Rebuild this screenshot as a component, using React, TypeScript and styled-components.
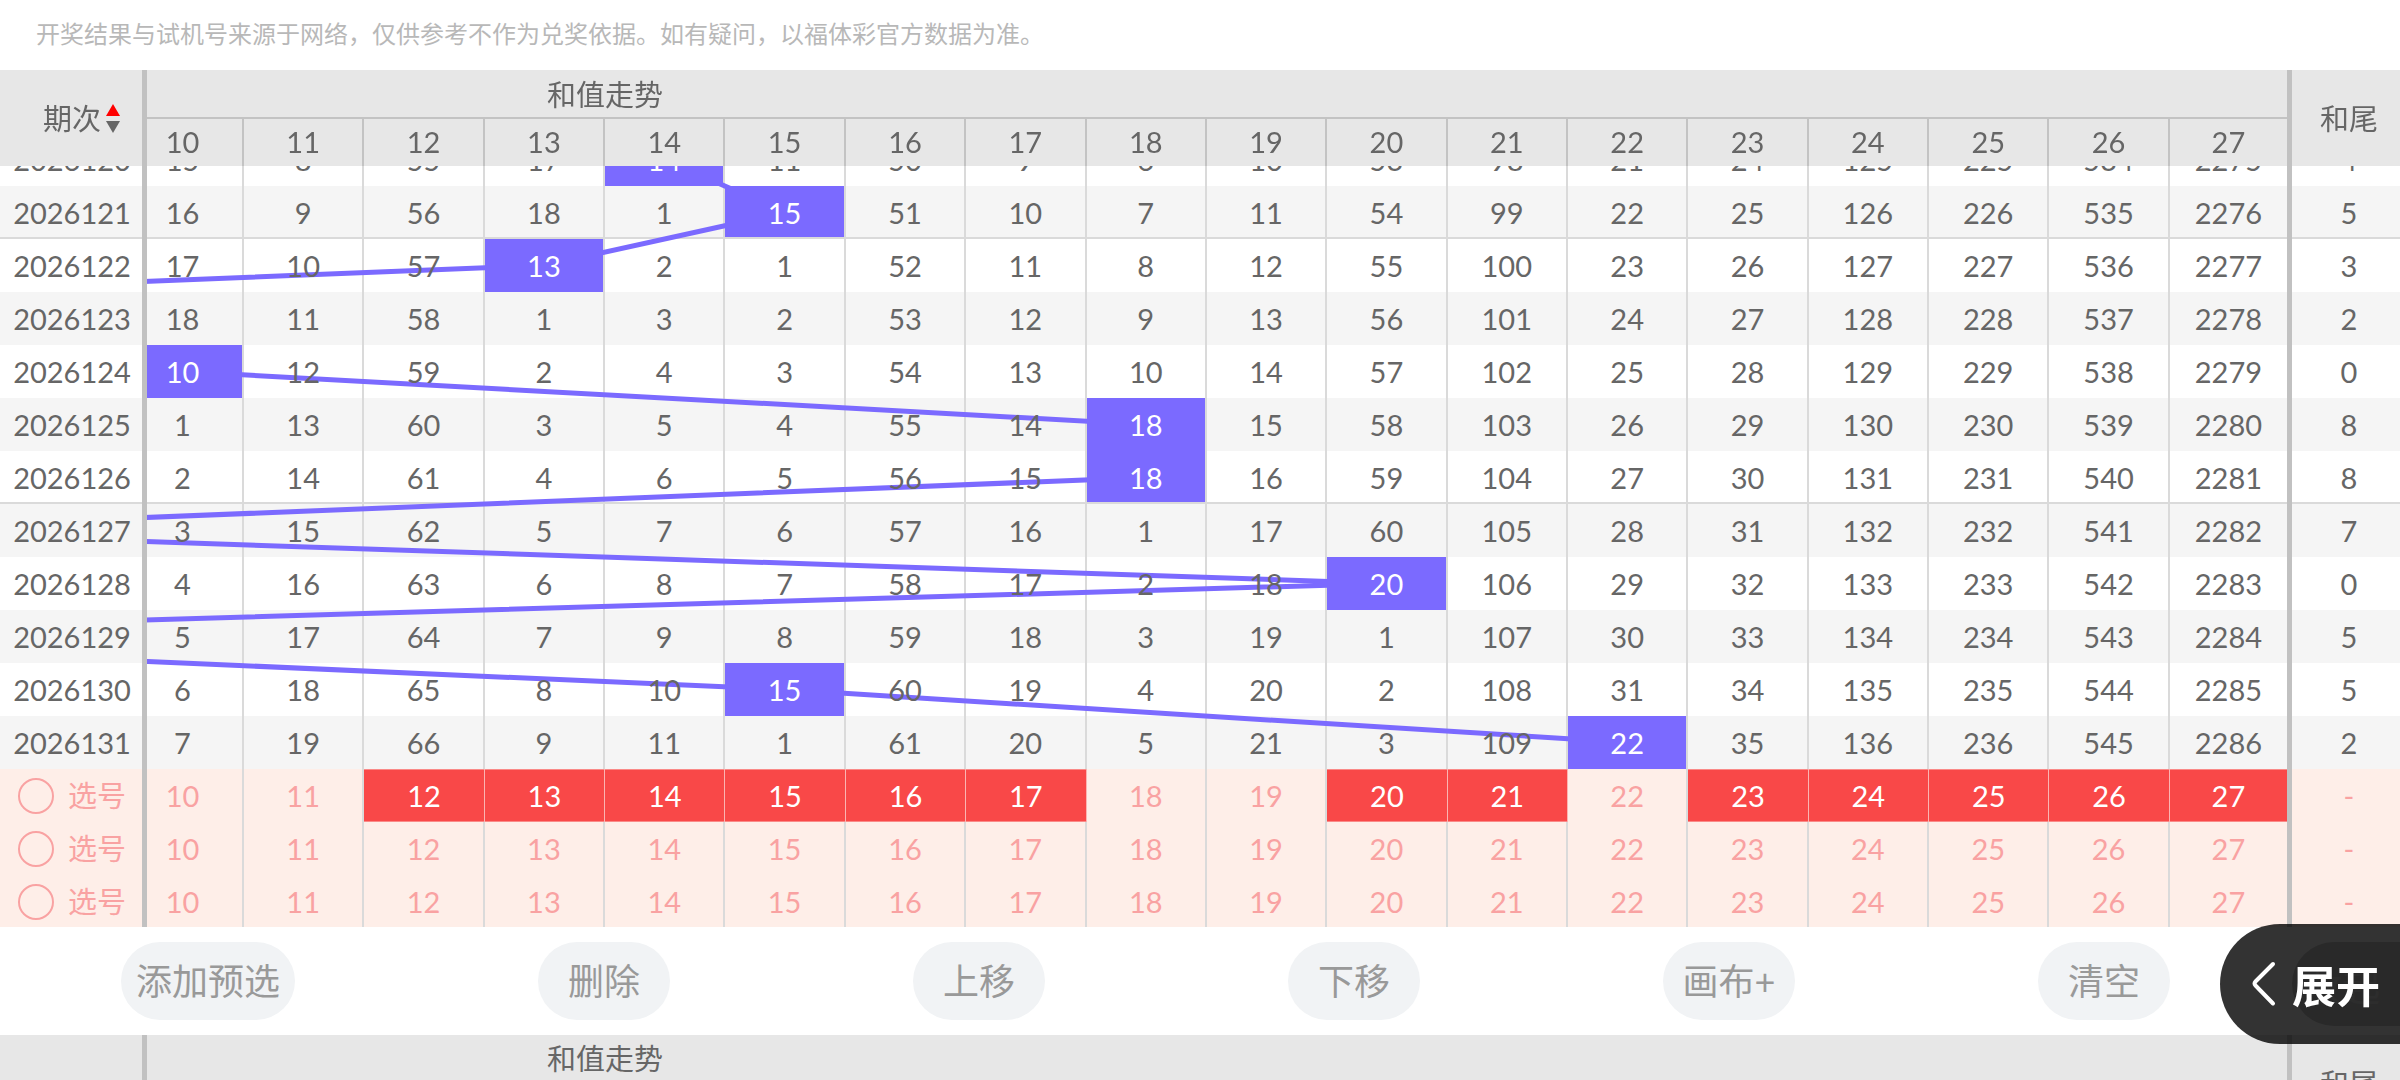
import React, { useLayoutEffect, useRef, useState } from "react";
import styled, { createGlobalStyle, css } from "styled-components";

const SUMS = [10, 11, 12, 13, 14, 15, 16, 17, 18, 19, 20, 21, 22, 23, 24, 25, 26, 27];
const FIRST_PERIOD = 2026120;
const DRAWS = [14, 15, 13, 2, 10, 18, 18, 7, 20, 5, 15, 22];
const FIRST_MISSES = [15, 8, 55, 17, 0, 11, 50, 9, 6, 10, 53, 98, 21, 24, 125, 225, 534, 2275];
const PICKED = [12, 13, 14, 15, 16, 17, 20, 21, 23, 24, 25, 26, 27];

const ROW_HEIGHT = 53;
const HEADER_HEIGHT = 96;
const PICK_ROWS = 3;
const INITIAL_SCROLL = 33;
const CHART_WIDTH = 2400;
const BODY_HEIGHT = ROW_HEIGHT * (DRAWS.length + PICK_ROWS);

const rows = DRAWS.reduce<{ period: number; sum: number; misses: number[] }[]>((list, sum, i) => {
  const previous = list[i - 1];
  const misses = previous
    ? previous.misses.map((m, c) => (SUMS[c] === sum ? 0 : m + 1))
    : FIRST_MISSES;
  list.push({ period: FIRST_PERIOD + i, sum, misses });
  return list;
}, []);

const trendPoints = DRAWS.map(
  (sum, i) => `${183 + (sum - 10) * 120.375},${i * ROW_HEIGHT + ROW_HEIGHT / 2}`
).join(" ");

const GlobalStyle = createGlobalStyle`
  html, body, #root { height: 100%; }
  body {
    margin: 0;
    overflow: hidden;
    background: #fff;
    color: #666;
    font-family: Lato, "Noto Sans CJK SC", sans-serif;
    font-size: 29px;
  }
  *, *::before, *::after { box-sizing: border-box; }
  button, input { font: inherit; color: inherit; margin: 0; }
  button { border: 0; padding: 0; background: none; cursor: pointer; }
`;

const Page = styled.main`
  display: flex;
  flex-direction: column;
  height: 100vh;
  overflow: hidden;
`;

const Notice = styled.p`
  flex: none;
  margin: 0;
  padding: 0 36px;
  height: 70px;
  line-height: 68px;
  font-size: 24px;
  color: #b8b8b8;
`;

const Board = styled.section`
  flex: none;
  max-height: 857px;
  overflow: hidden auto;
  scrollbar-width: none;
`;

const Sheet = styled.div`
  position: relative;
`;

const Table = styled.table`
  width: 100%;
  table-layout: fixed;
  border-collapse: separate;
  border-spacing: 0;
  text-align: center;
`;

const Col = styled.col<{ $width?: number }>`
  ${(p) => p.$width && `width: ${p.$width}px;`}
`;

const Head = styled.thead`
  position: sticky;
  top: 0;
  z-index: 2;
  background: #e7e7e7;
`;

const HeadCell = styled.th<{ $divided?: boolean; $first?: boolean }>`
  height: 47px;
  padding: 0 ${(p) => (p.$first ? 24 : 0)}px 2px 0;
  font-weight: 400;
  line-height: 44px;
  border-right: ${(p) => (p.$divided ? "2px solid #c3c3c3" : "0")};
`;

const GroupCell = styled(HeadCell)`
  height: 49px;
  padding: 2px 0 0 400px;
  text-align: left;
  border-bottom: 2px solid #c3c3c3;
`;

const PeriodHead = styled(HeadCell)`
  padding: 2px 0 0 22px;
  border-right: 5px solid #c1c1c1;
`;

const TailHead = styled(HeadCell)`
  padding: 2px 0 0 6px;
  border-left: 5px solid #c1c1c1;
`;

const CanvasHead = styled(Head)`
  th {
    height: ${HEADER_HEIGHT}px;
  }
`;

const CanvasTitle = styled(GroupCell)`
  border-bottom: 0;
  vertical-align: top;
`;

const SortButton = styled.button`
  display: inline-flex;
  align-items: center;
  gap: 4px;
`;

const BodyRow = styled.tr<{ $shaded: boolean; $ruled: boolean }>`
  background: ${(p) => (p.$shaded ? "#f5f5f5" : "#fff")};
  ${(p) =>
    p.$ruled &&
    css`
      td, th, mark { box-shadow: inset 0 -2px #dadada; }
    `}
`;

const PickRow = styled.tr`
  background: #feeee8;
  color: #f9a2a2;
`;

const Cell = styled.td<{ $divided?: boolean; $first?: boolean }>`
  height: ${ROW_HEIGHT}px;
  padding: 0 ${(p) => (p.$first ? 24 : 0)}px 0 0;
  line-height: ${ROW_HEIGHT}px;
  border-right: ${(p) => (p.$divided ? "2px solid #dadada" : "0")};
`;

const HitCell = styled(Cell)`
  padding: 0;
`;

const Digits = styled.span`
  position: relative;
  z-index: 1;
`;

const Hit = styled.mark<{ $first: boolean }>`
  position: relative;
  z-index: 1;
  display: block;
  height: ${ROW_HEIGHT}px;
  padding-right: ${(p) => (p.$first ? 24 : 0)}px;
  background: #7b6aff;
  color: #fff;
`;

const PeriodCell = styled.th`
  position: relative;
  z-index: 1;
  height: ${ROW_HEIGHT}px;
  padding: 0 0 0 2px;
  font-weight: 400;
  line-height: ${ROW_HEIGHT}px;
  background: inherit;
  border-right: 5px solid #c1c1c1;
`;

const TailCell = styled.td`
  height: ${ROW_HEIGHT}px;
  padding: 0 0 0 6px;
  line-height: ${ROW_HEIGHT}px;
  border-left: 5px solid #c1c1c1;
`;

const PickLabel = styled.label`
  display: flex;
  align-items: center;
  gap: 14px;
  padding-left: 16px;
`;

const PickRadio = styled.input`
  appearance: none;
  width: 36px;
  height: 36px;
  border: 2px solid #f9a2a2;
  border-radius: 50%;
`;

const PickCell = styled(Cell)<{ $picked: boolean }>`
  ${(p) =>
    p.$picked &&
    css`
      border-right: ${p.$divided ? "1px solid #fbb4b2" : "0"};
      background: #f94848;
      box-shadow: inset 0 1px #fa8a88, inset 0 -1px #fa8a88;
      color: #fff;
    `}
`;

const PickButton = styled.button`
  display: block;
  width: 100%;
  height: ${ROW_HEIGHT}px;
  line-height: ${ROW_HEIGHT}px;
`;

const TrendLines = styled.svg`
  position: absolute;
  left: 0;
  top: ${HEADER_HEIGHT}px;
  width: 100%;
  height: ${BODY_HEIGHT}px;
  pointer-events: none;
`;

const Toolbar = styled.nav`
  flex: none;
  position: relative;
  display: flex;
  align-items: center;
  justify-content: space-between;
  height: 108px;
  padding: 0 230px 0 121px;
`;

const ToolButton = styled.button`
  min-width: 132px;
  height: 78px;
  padding: 0 15px 4px;
  border-radius: 39px;
  background: #f1f3f5;
  color: #999;
  font-size: 36px;
`;

const CollapseButton = styled.button`
  position: absolute;
  right: 0;
  top: 15px;
  width: 108px;
  height: 84px;
  padding-right: 8px;
  border-radius: 42px 0 0 42px;
  background: #cdcdcd;
  color: #e1e1e1;
  font-size: 38px;
`;

const ExpandButton = styled.button`
  position: absolute;
  z-index: 3;
  right: 0;
  top: -3px;
  display: flex;
  align-items: center;
  gap: 15px;
  width: 180px;
  height: 120px;
  padding-left: 31px;
  border-radius: 60px 0 0 60px;
  background: rgba(0, 0, 0, 0.8);
  color: #fff;
  font-size: 44px;
  font-weight: 700;
  white-space: nowrap;
`;

function Columns() {
  return (
    <colgroup>
      <Col $width={147} />
      {SUMS.map((n) => (
        <Col key={n} $width={n === 10 ? 97 : n === 27 ? 117 : undefined} />
      ))}
      <Col $width={113} />
    </colgroup>
  );
}

function BoardHead() {
  return (
    <Head>
      <tr>
        <PeriodHead rowSpan={2} scope="col">
          <SortButton type="button">
            期次
            <svg width="16" height="30" viewBox="0 0 16 30" aria-hidden="true">
              <path d="M8 0 15 12H1Z" fill="#f00" />
              <path d="M8 29 15 17H1Z" fill="#666" />
            </svg>
          </SortButton>
        </PeriodHead>
        <GroupCell colSpan={SUMS.length} scope="colgroup">
          和值走势
        </GroupCell>
        <TailHead rowSpan={2} scope="col">
          和尾
        </TailHead>
      </tr>
      <tr>
        {SUMS.map((n) => (
          <HeadCell key={n} scope="col" $first={n === 10} $divided={n !== 27}>
            {n}
          </HeadCell>
        ))}
      </tr>
    </Head>
  );
}

export default function App() {
  const board = useRef<HTMLElement>(null);
  const [picks, setPicks] = useState<number[][]>([PICKED, [], []]);

  useLayoutEffect(() => {
    if (board.current) board.current.scrollTop = INITIAL_SCROLL;
  }, []);

  const toggle = (row: number, n: number) =>
    setPicks((all) =>
      all.map((list, i) =>
        i !== row ? list : list.includes(n) ? list.filter((x) => x !== n) : [...list, n]
      )
    );

  return (
    <Page>
      <GlobalStyle />
      <Notice>
        开奖结果与试机号来源于网络，仅供参考不作为兑奖依据。如有疑问，以福体彩官方数据为准。
      </Notice>
      <Board ref={board}>
        <Sheet>
          <Table>
            <Columns />
            <BoardHead />
            <tbody>
              {rows.map((row) => (
                <BodyRow
                  key={row.period}
                  $shaded={row.period % 2 === 1}
                  $ruled={row.period % 5 === 1 && row.period !== rows[rows.length - 1].period}
                >
                  <PeriodCell scope="row">{row.period}</PeriodCell>
                  {SUMS.map((n, c) =>
                    n === row.sum ? (
                      <HitCell key={n} $divided={n !== 27}>
                        <Hit $first={n === 10}>{n}</Hit>
                      </HitCell>
                    ) : (
                      <Cell key={n} $first={n === 10} $divided={n !== 27}>
                        <Digits>{row.misses[c]}</Digits>
                      </Cell>
                    )
                  )}
                  <TailCell>{row.sum % 10}</TailCell>
                </BodyRow>
              ))}
              {picks.map((list, r) => (
                <PickRow key={r}>
                  <PeriodCell scope="row">
                    <PickLabel>
                      <PickRadio type="radio" name="pick-row" />
                      选号
                    </PickLabel>
                  </PeriodCell>
                  {SUMS.map((n) => (
                    <PickCell
                      key={n}
                      $first={n === 10}
                      $divided={n !== 27}
                      $picked={list.includes(n)}
                    >
                      <PickButton type="button" onClick={() => toggle(r, n)}>
                        {n}
                      </PickButton>
                    </PickCell>
                  ))}
                  <TailCell>-</TailCell>
                </PickRow>
              ))}
            </tbody>
          </Table>
          <TrendLines
            viewBox={`0 0 ${CHART_WIDTH} ${BODY_HEIGHT}`}
            preserveAspectRatio="none"
            aria-hidden="true"
          >
            <polyline
              points={trendPoints}
              fill="none"
              stroke="#7b6aff"
              strokeWidth="5"
              vectorEffect="non-scaling-stroke"
            />
          </TrendLines>
        </Sheet>
      </Board>
      <Toolbar>
        {["添加预选", "删除", "上移", "下移", "画布+", "清空"].map((name) => (
          <ToolButton key={name} type="button">
            {name}
          </ToolButton>
        ))}
        <CollapseButton type="button">收起</CollapseButton>
        <ExpandButton type="button">
          <svg width="26" height="46" viewBox="0 0 26 46" aria-hidden="true">
            <path
              d="M22 3 4.500 20.500Q2.500 22.500 4.500 24.500L22 42.500"
              fill="none"
              stroke="#fff"
              strokeWidth="4"
              strokeLinecap="round"
              strokeLinejoin="round"
            />
          </svg>
          展开
        </ExpandButton>
      </Toolbar>
      <Table>
        <Columns />
        <CanvasHead>
          <tr>
            <PeriodHead as="td" />
            <CanvasTitle colSpan={SUMS.length} scope="colgroup">
              和值走势
            </CanvasTitle>
            <TailHead scope="col">和尾</TailHead>
          </tr>
        </CanvasHead>
      </Table>
    </Page>
  );
}
